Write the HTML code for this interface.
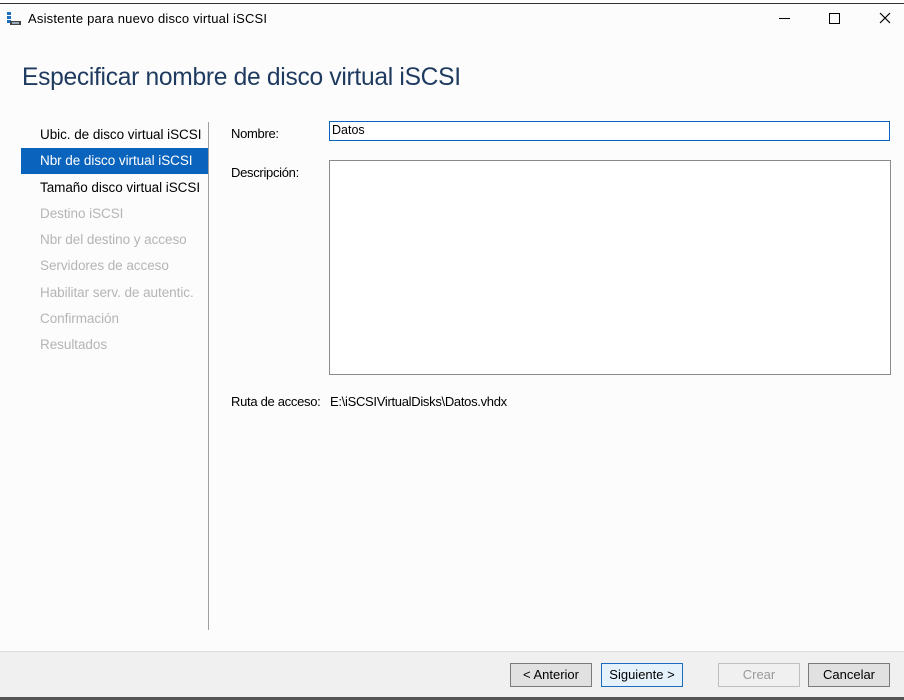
<!DOCTYPE html>
<html><head><meta charset="utf-8"><style>
body{margin:0;width:904px;height:700px;position:relative;background:#fcfcfc;font-family:"Liberation Sans",sans-serif;font-size:13px;color:#000;overflow:hidden}
.a{position:absolute;white-space:nowrap}
.nav{position:absolute;left:40px;font-size:13.5px;letter-spacing:-0.05px}
.g{color:#b5b5b5}
.btn{position:absolute;top:663px;height:22px;border:1px solid #7a7a7a;background:#e1e1e1;text-align:center;line-height:22px;font-size:13px}
</style></head><body>
<div class="a" style="left:0;top:0;width:904px;height:3px;background:#fff"></div>
<div class="a" style="left:0;top:3px;width:904px;height:1px;background:#333"></div>
<svg class="a" style="left:7px;top:12px" width="14" height="14"><rect x="0" y="0" width="4" height="3" fill="#1e6fc0"/><rect x="0" y="4" width="4" height="3" fill="#1e6fc0"/><rect x="0" y="8" width="4" height="3" fill="#1e6fc0"/><rect x="3" y="9" width="11" height="4" fill="#444"/><rect x="5" y="10" width="7" height="2" fill="#9ab"/></svg>
<div class="a" style="left:28px;top:11px;font-size:13px;letter-spacing:0.2px">Asistente para nuevo disco virtual iSCSI</div>
<div class="a" style="left:779px;top:18px;width:11px;height:1px;background:#000"></div>
<div class="a" style="left:829px;top:13px;width:9px;height:9px;border:1px solid #000"></div>
<svg class="a" style="left:879px;top:12px" width="12" height="12"><path d="M1 1L11 11M11 1L1 11" stroke="#000" stroke-width="1.2"/></svg>
<div class="a" style="left:22px;top:64px;font-size:24.6px;color:#1e3a5f;letter-spacing:-0.3px">Especificar nombre de disco virtual iSCSI</div>
<div class="a" style="left:208px;top:122px;width:1px;height:508px;background:#a0a0a0"></div>
<div class="a" style="left:21px;top:148px;width:187px;height:26px;background:#0a64be"></div>
<div class="nav" style="top:127px">Ubic. de disco virtual iSCSI</div>
<div class="nav" style="top:153px;color:#fff">Nbr de disco virtual iSCSI</div>
<div class="nav" style="top:180px">Tamaño disco virtual iSCSI</div>
<div class="nav g" style="top:206px">Destino iSCSI</div>
<div class="nav g" style="top:232px">Nbr del destino y acceso</div>
<div class="nav g" style="top:258px">Servidores de acceso</div>
<div class="nav g" style="top:285px">Habilitar serv. de autentic.</div>
<div class="nav g" style="top:311px">Confirmación</div>
<div class="nav g" style="top:337px">Resultados</div>
<div class="a" style="left:231px;top:126px;letter-spacing:-0.3px">Nombre:</div>
<div class="a" style="left:231px;top:165px;letter-spacing:-0.3px">Descripción:</div>
<div class="a" style="left:329px;top:121px;width:559px;height:18px;border:1px solid #0a64be;background:#fff"></div>
<div class="a" style="left:332px;top:123px;font-size:12.5px">Datos</div>
<div class="a" style="left:329px;top:160px;width:560px;height:213px;border:1px solid #8a8a8a;background:#fff"></div>
<div class="a" style="left:231px;top:394px;letter-spacing:-0.3px">Ruta de acceso:</div>
<div class="a" style="left:330px;top:394px;letter-spacing:-0.3px">E:\iSCSIVirtualDisks\Datos.vhdx</div>
<div class="a" style="left:0;top:651px;width:904px;height:46px;background:#f0f0f0;border-top:1px solid #dcdcdc"></div>
<div class="a" style="left:0;top:697px;width:904px;height:3px;background:#555"></div>
<div class="btn" style="left:510px;width:80px">&lt; Anterior</div>
<div class="btn" style="left:601px;width:80px;border-color:#1a6cc0;background:#e5f1fb">Siguiente &gt;</div>
<div class="btn" style="left:718px;width:80px;color:#9a9a9a;border-color:#bfbfbf;background:#f0f0f0">Crear</div>
<div class="btn" style="left:808px;width:80px">Cancelar</div>
</body></html>
